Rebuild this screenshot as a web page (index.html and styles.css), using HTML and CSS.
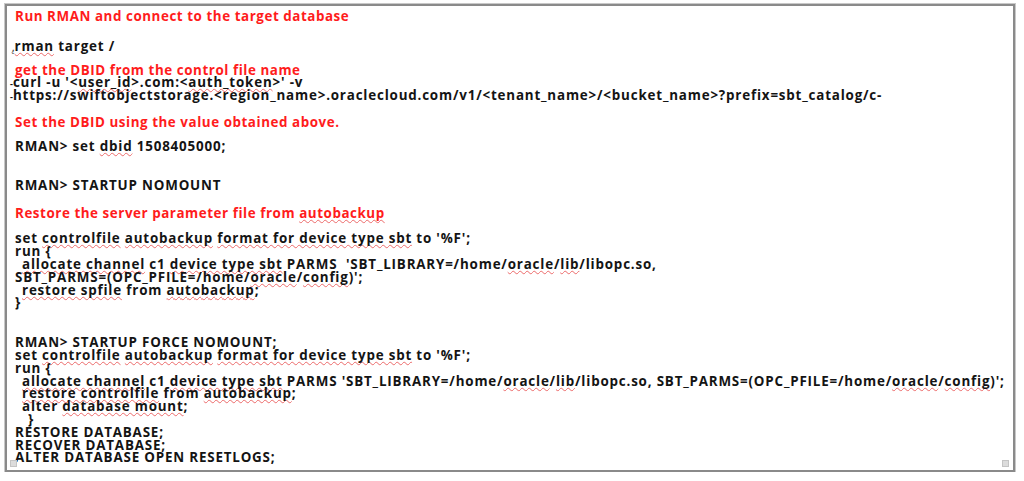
FILE: index.html
```html
<!DOCTYPE html>
<html>
<head>
<meta charset="utf-8">
<link rel="stylesheet" href="styles.css">
</head>
<body>
<div class="page">
  <div class="box">
    <div class="ln head t1">Run RMAN and connect to the target database</div>
    <div class="ln t2"><span class="mark">‚</span><span class="sq">rman</span> target /</div>
    <div class="ln stray">`</div>
    <div class="ln head t3">get the DBID from the control file name</div>
    <div class="ln out"><span class="dash">-</span>curl -u '&lt;<span class="sq">user_id</span>&gt;.com:&lt;<span class="sq">auth_token</span>&gt;' -v</div>
    <div class="ln out"><span class="dash">-</span>https://swiftobjectstorage.&lt;region_name&gt;.oraclecloud.com/v1/&lt;tenant_name&gt;/&lt;bucket_name&gt;?prefix=sbt_catalog/c-</div>
    <div class="ln head t4">Set the DBID using the value obtained above.</div>
    <div class="ln t5">RMAN&gt; set <span class="sq">dbid</span> 1508405000;</div>
    <div class="ln t6">RMAN&gt; STARTUP NOMOUNT</div>
    <div class="ln head t7">Restore the server parameter file from <span class="sq">autobackup</span></div>
    <div class="ln t8">set <span class="sq">controlfile</span> <span class="sq">autobackup</span> <span class="sq">format for device type sbt</span> to '%F';</div>
    <div class="ln">run {</div>
    <div class="ln ind"><span class="sq">allocate channel</span> c1 <span class="sq">device type sbt</span> PARMS&nbsp; 'SBT_LIBRARY=/home/<span class="sq">oracle</span>/<span class="sq">lib</span>/libopc.so,</div>
    <div class="ln">SBT_PARMS=(OPC_PFILE=/home/<span class="sq">oracle</span>/<span class="sq">config</span>)';</div>
    <div class="ln ind"><span class="sq">restore spfile</span> from <span class="sq">autobackup</span>;</div>
    <div class="ln">}</div>
    <div class="block2">
      <div class="ln">RMAN&gt; STARTUP FORCE NOMOUNT;</div>
      <div class="ln">set <span class="sq">controlfile</span> <span class="sq">autobackup</span> <span class="sq">format for device type sbt</span> to '%F';</div>
      <div class="ln">run {</div>
      <div class="ln ind"><span class="sq">allocate channel</span> c1 <span class="sq">device type sbt</span> PARMS 'SBT_LIBRARY=/home/<span class="sq">oracle</span>/<span class="sq">lib</span>/libopc.so, SBT_PARMS=(OPC_PFILE=/home/<span class="sq">oracle</span>/<span class="sq">config</span>)';</div>
      <div class="ln ind"><span class="sq">restore controlfile</span> from <span class="sq">autobackup</span>;</div>
      <div class="ln ind">alter <span class="sq">database mount</span>;</div>
      <div class="ln ind2">}</div>
      <div class="ln">RESTORE DATABASE;</div>
      <div class="ln">RECOVER DATABASE;</div>
      <div class="ln">ALTER DATABASE OPEN RESETLOGS;</div>
    </div>
    <span class="handle hl"></span>
    <span class="handle hr"></span>
  </div>
</div>
</body>
</html>
```
FILE: styles.css
```css
html, body {
  margin: 0;
  padding: 0;
  background: #ffffff;
}
.page {
  padding: 4px 0 0 5px;
}
.box {
  position: relative;
  box-sizing: border-box;
  width: 1010px;
  height: 468px;
  border: 2px solid #8a8a8a;
  outline: 1px solid #c8c8c8;
  padding: 4px 0 0 8px;
  font-family: "Open Sans", "Liberation Sans", sans-serif;
  font-weight: 700;
  font-size: 13.4px;
  letter-spacing: 0.81px;
  color: #141414;
}
.ln {
  height: 12.8px;
  line-height: 12.8px;
  white-space: pre;
}
.head {
  color: #ff1c1c;
  letter-spacing: 0.55px;
}
.t1 { margin-top: 0; }
.t2 { margin-top: 17px; margin-left: -3px; }
.stray { height: 6px; line-height: 6px; margin-left: -4px; font-size: 9px; color: #444; }
.t3 { margin-top: 5px; }
.out { margin-left: -5px; height: 12.4px; line-height: 12.4px; }
.t4 { margin-top: 14.5px; }
.t5 { margin-top: 12px; }
.t6 { margin-top: 26px; }
.t7 { margin-top: 14.5px; }
.t8 { margin-top: 13px; }
.block2 { margin-top: 27px; }
.ind { padding-left: 7px; }
.ind2 { padding-left: 13px; }
.mark { font-size: 9px; color: #444; letter-spacing: 0; }
.dash { font-size: 9px; letter-spacing: 0; }
.sq {
  text-decoration: underline wavy #ec6a6a;
  text-decoration-thickness: 1px;
  text-underline-offset: 1px;
  text-decoration-skip-ink: none;
}
.handle {
  position: absolute;
  width: 5px;
  height: 5px;
  background: #dcdcdc;
  border: 1px solid #c4c4c4;
  bottom: 3px;
}
.hl { left: 3px; }
.hr { right: 4px; }
```
